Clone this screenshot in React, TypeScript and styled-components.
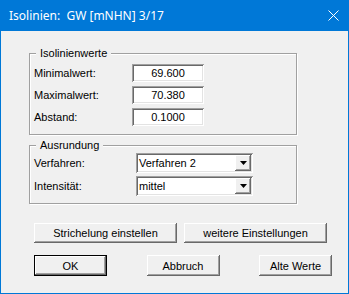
import React from 'react';
import styled, { createGlobalStyle } from 'styled-components';

const GlobalStyle = createGlobalStyle`
  html, body { margin: 0; padding: 0; }
  body {
    width: 349px;
    height: 294px;
    overflow: hidden;
    background: #f0f0f0;
    font-family: "Liberation Sans", Arial, sans-serif;
  }
  * { box-sizing: border-box; }
`;

const Window = styled.div`
  width: 349px;
  height: 294px;
  border: 1px solid #0078d7;
  border-top: 0;
  background: #f0f0f0;
  display: flex;
  flex-direction: column;
`;

const TitleBar = styled.div`
  height: 31px;
  flex: none;
  background: #0078d7;
  display: flex;
  align-items: center;
  justify-content: space-between;
  padding: 0 9px 1px 8px;
  color: #fff;
  font-family: "Noto Sans", "Open Sans", sans-serif;
  font-size: 12px;
`;

const TitleText = styled.span`
  white-space: pre;
`;

const Body = styled.div`
  flex: 1;
  display: flex;
  flex-direction: column;
  padding: 22px 0 0 28px;
  font-size: 11px;
  color: #000;
`;

const GroupBox = styled.div<{ $h: number; $mt: number }>`
  position: relative;
  width: 268px;
  height: ${(p) => p.$h}px;
  margin-top: ${(p) => p.$mt}px;
  border: 1px solid #a0a0a0;
  box-shadow: inset 1px 1px 0 #fff, 1px 1px 0 #fff;
`;

const GroupTitle = styled.span`
  position: absolute;
  top: -7px;
  left: 6px;
  padding: 0 4px;
  line-height: 13px;
  background: #f0f0f0;
`;

const FieldGrid = styled.div<{ $labelW: number; $rowH: number; $gap: number; $pt: number }>`
  display: grid;
  grid-template-columns: ${(p) => p.$labelW}px auto;
  grid-auto-rows: ${(p) => p.$rowH}px;
  row-gap: ${(p) => p.$gap}px;
  padding: ${(p) => p.$pt}px 0 0 4px;
  align-items: center;
  justify-items: start;
`;

const Label = styled.span`
  line-height: 13px;
`;

const sunken = `
  background: #fff;
  box-shadow: inset 1px 1px 0 #a0a0a0, inset -1px -1px 0 #fff,
    inset 2px 2px 0 #696969, inset -2px -2px 0 #e3e3e3;
`;

const Edit = styled.input`
  ${sunken}
  width: 72px;
  height: 18px;
  border: 0;
  padding: 0;
  margin: 0;
  outline: none;
  text-align: center;
  font-family: "Liberation Sans", Arial, sans-serif;
  font-size: 11px;
  color: #000;
`;

const Combo = styled.div`
  ${sunken}
  width: 117px;
  height: 20px;
  display: flex;
  align-items: center;
  justify-content: space-between;
  padding: 0 2px 0 3px;
`;

const ComboText = styled.span`
  line-height: 13px;
`;

const raised = `
  background: #f0f0f0;
  box-shadow: inset -1px -1px 0 #696969, inset 1px 1px 0 #fff,
    inset -2px -2px 0 #a0a0a0, inset 2px 2px 0 #f0f0f0;
`;

const DropButton = styled.div`
  ${raised}
  width: 16px;
  height: 16px;
  display: flex;
  align-items: center;
  justify-content: center;
`;

const ButtonRow = styled.div<{ $mt: number; $w: number; $gap?: number }>`
  display: flex;
  justify-content: space-between;
  margin: ${(p) => p.$mt}px 0 0 5px;
  width: ${(p) => p.$w}px;
`;

const Button = styled.button<{ $w: number; $h: number; $default?: boolean }>`
  ${raised}
  width: ${(p) => p.$w}px;
  height: ${(p) => p.$h}px;
  margin: 0;
  padding: 0;
  font-family: "Liberation Sans", Arial, sans-serif;
  font-size: 11px;
  color: #000;
  border: ${(p) => (p.$default ? '1px solid #000' : '0')};
`;

const Arrow = () => (
  <svg width="7" height="4" viewBox="0 0 7 4">
    <path d="M0 0H7L3.5 4Z" fill="#000" />
  </svg>
);

const CloseIcon = () => (
  <svg width="11" height="11" viewBox="0 0 11 11">
    <path d="M0.5 0.5L10.5 10.5M10.5 0.5L0.5 10.5" stroke="#fff" strokeWidth="1" />
  </svg>
);

export default function App() {
  return (
    <>
      <GlobalStyle />
      <Window>
        <TitleBar>
          <TitleText>Isolinien:  GW [mNHN] 3/17</TitleText>
          <CloseIcon />
        </TitleBar>
        <Body>
          <GroupBox $h={82} $mt={0}>
            <GroupTitle>Isolinienwerte</GroupTitle>
            <FieldGrid $labelW={98} $rowH={18} $gap={4} $pt={10}>
              <Label>Minimalwert:</Label>
              <Edit readOnly defaultValue="69.600" />
              <Label>Maximalwert:</Label>
              <Edit readOnly defaultValue="70.380" />
              <Label>Abstand:</Label>
              <Edit readOnly defaultValue="0.1000" />
            </FieldGrid>
          </GroupBox>
          <GroupBox $h={59} $mt={10}>
            <GroupTitle>Ausrundung</GroupTitle>
            <FieldGrid $labelW={102} $rowH={20} $gap={3} $pt={7}>
              <Label>Verfahren:</Label>
              <Combo>
                <ComboText>Verfahren 2</ComboText>
                <DropButton>
                  <Arrow />
                </DropButton>
              </Combo>
              <Label>Intensität:</Label>
              <Combo>
                <ComboText>mittel</ComboText>
                <DropButton>
                  <Arrow />
                </DropButton>
              </Combo>
            </FieldGrid>
          </GroupBox>
          <ButtonRow $mt={19} $w={293}>
            <Button $w={143} $h={20}>Strichelung einstellen</Button>
            <Button $w={143} $h={20}>weitere Einstellungen</Button>
          </ButtonRow>
          <ButtonRow $mt={12} $w={298}>
            <Button $w={73} $h={21} $default>OK</Button>
            <Button $w={73} $h={21}>Abbruch</Button>
            <Button $w={73} $h={21}>Alte Werte</Button>
          </ButtonRow>
        </Body>
      </Window>
    </>
  );
}
